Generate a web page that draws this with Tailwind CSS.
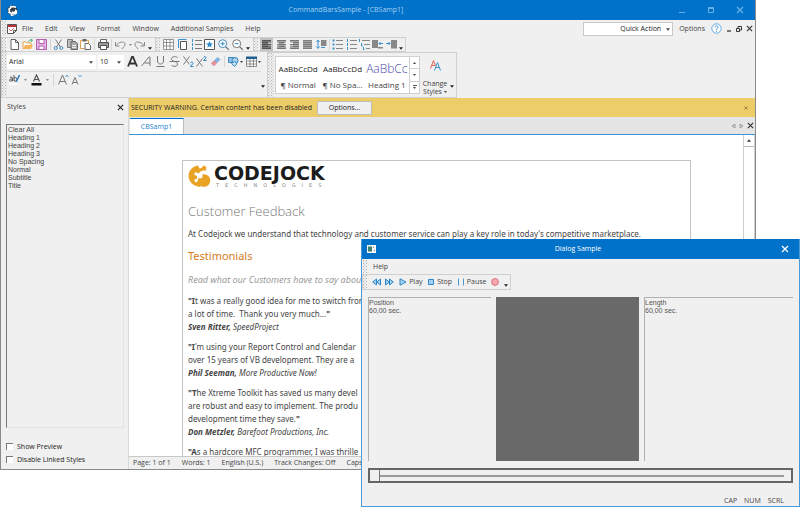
<!DOCTYPE html>
<html lang="en">
<head>
  <meta charset="UTF-8" />
  <meta name="viewport" content="width=device-width, initial-scale=1.0"/>
  <title>CommandBarsSample - [CBSamp1]</title>
  <script src="https://cdn.jsdelivr.net/npm/@tailwindcss/browser@4"></script>
</head>
<body class="relative h-screen overflow-hidden bg-white font-['Open_Sans',sans-serif] text-[7px] leading-[10px] text-[#444]">

<!-- shared glyphs -->
<svg class="hidden">
  <symbol id="down" viewBox="0 0 5 3"><path d="M0 0h5L2.500 3z" fill="currentColor"/></symbol>
  <symbol id="x" viewBox="0 0 8 8"><path d="M1 1l6 6M7 1L1 7" stroke="currentColor" stroke-width="1.300" fill="none"/></symbol>
</svg>
<svg class="absolute size-0">
  <pattern id="dots" width="3" height="3" patternUnits="userSpaceOnUse"><path d="M0 0h1v1H0zM1.500 1.500h1v1h-1z" fill="#b4b4b4"/></pattern>
</svg>

<!-- main window -->
<main class="absolute left-0 right-[44px] top-0 bottom-[37px] flex flex-col border border-t-0 border-[#8a8a8a] bg-[#f0f0f0]">
  <header class="grid h-[20px] shrink-0 grid-cols-3 items-center bg-[#0072c9] px-[6px] text-[#a9d0f0]">
    <svg class="size-[11px]" viewBox="0 0 11 11"><circle cx="5.500" cy="5.500" r="5" fill="#333c46"/><path d="M9 2.500L7 1.500 5.500 2 4 1.500 3.500 3 2 4l.5 2L2 7.500l2 .5.500 2 2 .5" fill="none" stroke="#fff" stroke-width="1.600"/><circle cx="7.500" cy="7" r="2.700" fill="#fff"/><circle cx="6.500" cy="5" r="1.700" fill="#333c46"/></svg>
    <h1 class="pr-[64px] text-center">CommandBarsSample - [CBSamp1]</h1>
    <div class="flex justify-end gap-[21px] pr-[5px] text-[#68b1e8]">
      <button aria-label="Minimize"><svg class="size-[8px]" viewBox="0 0 8 8"><path d="M1 6.500h6" stroke="currentColor"/></svg></button>
      <button aria-label="Maximize"><svg class="size-[8px]" viewBox="0 0 8 8"><path d="M1.500 1.500h5v5h-5zM1.500 2.500h5" stroke="currentColor" fill="none"/></svg></button>
      <button aria-label="Close"><svg class="size-[8px]"><use href="#x"/></svg></button>
    </div>
  </header>

  <!-- menu bar -->
  <nav class="flex h-[17px] shrink-0 items-center">
    <svg class="mx-px h-[15px] w-[4px]"><rect width="4" height="15" fill="url(#dots)"/></svg>
    <svg class="size-[10px]" viewBox="0 0 10 10"><path d="M.5.5h9v6l-3 3h-6z" fill="#fff" stroke="#555"/><path d="M1 1h8v2H1z" fill="#c0303c"/><path d="M2 5l2 2 3-3" stroke="#d66" fill="none"/><path d="M6.500 9.500v-3h3" fill="none" stroke="#555"/></svg>
    <div class="ml-[5px] flex gap-[12px]">
      <button>File</button><button>Edit</button><button>View</button><button>Format</button>
      <button>Window</button><button>Additional Samples</button><button>Help</button>
    </div>
    <div class="ml-auto flex items-center">
      <label class="relative block">
        <select aria-label="Quick Action" class="block h-[14px] w-[90px] appearance-none border border-[#c8c8c8] bg-white pr-[11px] text-[#222] [text-align-last:right]"><option>Quick Action</option></select>
        <svg class="absolute right-[3px] top-[6px] h-[3px] w-[4px]"><use href="#down"/></svg>
      </label>
      <button class="ml-[6px]">Options</button>
      <button aria-label="About" class="ml-[6px]"><svg class="size-[11px]" viewBox="0 0 11 11"><circle cx="5.500" cy="5.500" r="4.700" fill="#fff" stroke="#3f97da" stroke-width=".8"/><path d="M4 4.300c0-2 3-2 3 0 0 1-1.500 1.200-1.500 2.500M5.500 7.800v1" fill="none" stroke="#3f97da"/></svg></button>
      <button aria-label="Minimize document" class="ml-[4px]"><svg class="size-[6px]" viewBox="0 0 6 6"><path d="M1 5h4" stroke="#333" stroke-width="1.300"/></svg></button>
      <button aria-label="Restore document" class="ml-[4px]"><svg class="size-[6px]" viewBox="0 0 6 6"><path d="M.5 2.500h3v3h-3zM2 2V.5h3.500V4H4" stroke="#333" fill="none"/></svg></button>
      <button aria-label="Close document" class="ml-[4px] mr-[2px]"><svg class="size-[7px] text-[#333]"><use href="#x"/></svg></button>
    </div>
  </nav>

  <!-- toolbars -->
  <div class="flex h-[15px] shrink-0">
    <div class="flex w-[155px] items-center justify-between border border-[#d0d0d0] pr-[3px]">
      <svg class="h-[13px] w-[4px]"><rect width="4" height="13" fill="url(#dots)"/></svg>
      <button aria-label="New"><svg class="size-[11px]" viewBox="0 0 11 11"><path d="M2 .5h4.500L9.500 3.500v7H2zM6.500.5v3h3" fill="#fff" stroke="#666"/></svg></button>
      <button aria-label="Open"><svg class="size-[11px]" viewBox="0 0 11 11"><path d="M1 10V3h3l1 1h4v2" fill="#fff" stroke="#e3a04a"/><path d="M1 10l2-4h8L9 10z" fill="#f3b45c"/><path d="M6 3c1-2 2-2 4-2M8.500 0L10.500 1 9 3" fill="none" stroke="#4fae72"/></svg></button>
      <button aria-label="Save"><svg class="size-[11px]" viewBox="0 0 11 11"><path d="M.5.5h10v10H.5z" fill="#e8b5e4" stroke="#b35fae"/><path d="M3 .5h5v4H3zM3 7h5v3.500H3z" fill="#fff" stroke="#b35fae"/></svg></button>
      <span class="h-[11px] w-px bg-[#d5d5d5]"></span>
      <button aria-label="Cut"><svg class="size-[11px]" viewBox="0 0 11 11"><path d="M2.500.5l5 7.500M8.500.5l-5 7.500" stroke="#777" fill="none"/><circle cx="2.700" cy="9" r="1.500" fill="none" stroke="#3f87be"/><circle cx="8.300" cy="9" r="1.500" fill="none" stroke="#3f87be"/></svg></button>
      <button aria-label="Copy"><svg class="size-[11px]" viewBox="0 0 11 11"><path d="M.5.5h5v8h-5z" fill="#bbb" stroke="#777"/><path d="M4 2.500h4l2.500 2v6H4z" fill="#aaa" stroke="#666"/><path d="M5 6.500h4M5 8.500h4" stroke="#eee"/></svg></button>
      <button aria-label="Paste"><svg class="size-[11px]" viewBox="0 0 11 11"><path d="M.5 1.500h8v8h-8z" fill="#fff" stroke="#e0a050"/><path d="M2.500 0h4v2.500h-4z" fill="#666"/><path d="M5 4.500h3.500L10.500 6.500v4H5z" fill="#fff" stroke="#666"/></svg></button>
      <span class="h-[11px] w-px bg-[#d5d5d5]"></span>
      <button aria-label="Print"><svg class="size-[11px]" viewBox="0 0 11 11"><path d="M2.500 3V.5h6V3" fill="#fff" stroke="#666"/><path d="M.5 3.500h10v5H.5z" fill="#999" stroke="#555"/><path d="M2.500 6.500h6v4h-6z" fill="#fff" stroke="#555"/></svg></button>
      <span class="h-[11px] w-px bg-[#d5d5d5]"></span>
      <button aria-label="Undo"><svg class="size-[11px]" viewBox="0 0 11 11"><path d="M.5 3v4h4M.5 7C4 2.500 9 2 10 4.500 10.500 7 8 8 7 10" fill="none" stroke="#888"/></svg></button>
      <svg class="h-[2px] w-[3px] text-[#888]"><use href="#down"/></svg>
      <button aria-label="Redo"><svg class="size-[11px]" viewBox="0 0 11 11"><path d="M10.500 3v4h-4M10.500 7C7 2.500 2 2 1 4.500.5 7 3 8 4 10" fill="none" stroke="#888"/></svg></button>
      <svg class="mb-[1px] h-[3px] w-[4px] self-end text-[#222]"><use href="#down"/></svg>
    </div>
    <div class="flex w-[98px] items-center justify-between border border-l-0 border-[#d0d0d0] pr-[3px]">
      <svg class="h-[13px] w-[4px]"><rect width="4" height="13" fill="url(#dots)"/></svg>
      <button aria-label="Grid"><svg class="size-[11px]" viewBox="0 0 11 11"><path d="M.5.5h10v10H.5zM3.500 0v11M7 0v11M0 3.500h11M0 7h11" fill="#fff" stroke="#888" stroke-width=".9"/></svg></button>
      <button aria-label="Pages"><svg class="size-[11px]" viewBox="0 0 11 11"><path d="M3.500 2.500h6v8h-6z" fill="#fff" stroke="#555"/><path d="M1.500 9V.5h8" fill="none" stroke="#3b92cc"/></svg></button>
      <button aria-label="Line numbers"><svg class="size-[11px]" viewBox="0 0 11 11"><path d="M4 1.500h7M4 5.500h7M4 9.500h7" stroke="#777"/><path d="M1.500 0v3M1.500 4v3M1.500 8v3" stroke="#3b92cc"/></svg></button>
      <button aria-label="Favorite"><svg class="size-[11px]" viewBox="0 0 11 11"><path d="M.5.5h10v10H.5z" fill="#fff" stroke="#555"/><path d="M5.500 2l1 2.300 2.500.2L7 6l.7 2.500-2.200-1.300L3.300 8.500 4 6 2 4.500l2.500-.2z" fill="#2f8bcb"/></svg></button>
      <button aria-label="Zoom in"><svg class="size-[11px]" viewBox="0 0 11 11"><circle cx="4.700" cy="4.700" r="4" fill="#fff" stroke="#4a8fc0"/><path d="M7.800 7.800l3 3" stroke="#666" stroke-width="1.200"/><path d="M2.700 4.700h4M4.700 2.700v4" stroke="#2f8bcb"/></svg></button>
      <button aria-label="Zoom out"><svg class="size-[11px]" viewBox="0 0 11 11"><circle cx="4.700" cy="4.700" r="4" fill="#fff" stroke="#777"/><path d="M7.800 7.800l3 3" stroke="#666" stroke-width="1.200"/><path d="M2.700 4.700h4" stroke="#2f8bcb"/></svg></button>
      <svg class="mb-[1px] h-[3px] w-[4px] self-end text-[#222]"><use href="#down"/></svg>
    </div>
    <div class="flex w-[152px] items-center justify-between border border-l-0 border-[#d0d0d0] pr-[2px]">
      <svg class="h-[13px] w-[4px]"><rect width="4" height="13" fill="url(#dots)"/></svg>
      <button aria-label="Align left" class="bg-[#c2c2c2] p-px"><svg class="size-[11px]" viewBox="0 0 11 11"><path d="M1 1h9v2.500H1zM1 3.500h6v3H1zM1 6.500h9V9.500H1z" fill="#777"/><path d="M1 1.500h9M1 3.500h6M1 5.500h9M1 7.500h6M1 9.500h9" stroke="#555"/></svg></button>
      <button aria-label="Center"><svg class="size-[11px]" viewBox="0 0 11 11"><path d="M1 1h9v2.500H1zM2.500 3.500h6v3h-6zM1 6.500h9V9.500H1z" fill="#a5a5a5"/><path d="M1 1.500h9M2.500 3.500h6M1 5.500h9M2.500 7.500h6M1 9.500h9" stroke="#777"/></svg></button>
      <button aria-label="Align right"><svg class="size-[11px]" viewBox="0 0 11 11"><path d="M1 1h9v2.500H1zM4 3.500h6v3H4zM1 6.500h9V9.500H1z" fill="#a5a5a5"/><path d="M1 1.500h9M4 3.500h6M1 5.500h9M4 7.500h6M1 9.500h9" stroke="#777"/></svg></button>
      <button aria-label="Justify"><svg class="size-[11px]" viewBox="0 0 11 11"><path d="M1 1h9v9H1z" fill="#a5a5a5"/><path d="M1 1.500h9M1 3.500h9M1 5.500h9M1 7.500h9M1 9.500h9" stroke="#808080"/></svg></button>
      <button aria-label="Line spacing"><svg class="size-[11px]" viewBox="0 0 11 11"><path d="M5 1h5.500v6H5z" fill="#888"/><path d="M.5 3L2 1l1.500 2M2 1v8M.5 7.500L2 9.500l1.500-2M5 8.500h4" fill="none" stroke="#3b92cc"/></svg></button>
      <span class="h-[11px] w-px bg-[#d5d5d5]"></span>
      <button aria-label="Bullets"><svg class="size-[11px]" viewBox="0 0 11 11"><path d="M4 1.500h7M4 5.500h7M4 9.500h7" stroke="#888"/><path d="M.5 1.500h2M.5 5.500h2M.5 9.500h2" stroke="#3b92cc" stroke-width="2"/></svg></button>
      <button aria-label="Numbering"><svg class="size-[11px]" viewBox="0 0 11 11"><path d="M4 1.500h7M4 5.500h7M4 9.500h7" stroke="#888"/><path d="M1.500 0v3M1.500 4v3M1.500 8v3" stroke="#3b92cc"/></svg></button>
      <button aria-label="Multilevel list"><svg class="size-[11px]" viewBox="0 0 11 11"><path d="M3 1.500h8M5 5.500h6M7 9.500h4" stroke="#888"/><path d="M.5 0v3M2.500 4v3h1.500M4.500 8v3H6" fill="none" stroke="#3b92cc"/></svg></button>
      <button aria-label="Decrease indent"><svg class="size-[11px]" viewBox="0 0 11 11"><path d="M0 1h6v8H0zM6 8h5v1.500H6z" fill="#888"/><path d="M11 4.500H7M8.500 3L7 4.500 8.500 6" fill="none" stroke="#3b92cc"/></svg></button>
      <button aria-label="Increase indent"><svg class="size-[11px]" viewBox="0 0 11 11"><path d="M5 1h6v8.500H5z" fill="#888"/><path d="M0 4.500h4M2.500 3L4 4.500 2.500 6" fill="none" stroke="#3b92cc"/></svg></button>
      <svg class="mb-[1px] h-[3px] w-[4px] self-end text-[#222]"><use href="#down"/></svg>
    </div>
  </div>

  <div class="flex h-[46px] shrink-0">
    <div class="flex w-[267px] border border-t-0 border-[#d0d0d0]">
      <svg class="h-[44px] w-[5px] shrink-0"><rect width="5" height="44" fill="url(#dots)"/></svg>
      <div class="w-[254px]">
        <div class="flex h-[20px] items-center border-b border-[#dcdcdc]">
          <label class="relative mr-[2px] block">
            <select aria-label="Font" class="block h-[14px] w-[89px] appearance-none bg-white px-[2px] text-[#222]"><option>Arial</option></select>
            <svg class="absolute right-[3px] top-[6px] h-[3px] w-[4px]"><use href="#down"/></svg>
          </label>
          <label class="relative block">
            <select aria-label="Font size" class="block h-[14px] w-[26px] appearance-none bg-white px-[2px] text-[#222]"><option>10</option></select>
            <svg class="absolute right-[3px] top-[6px] h-[3px] w-[4px]"><use href="#down"/></svg>
          </label>
          <div class="flex flex-1 items-center justify-between pl-[3px]">
            <button aria-label="Bold"><svg class="size-[11px]" viewBox="0 0 11 11"><path d="M1 10.500L5 1h1l4 9.500M3 7.500h5" fill="none" stroke="#333" stroke-width="1.800"/></svg></button>
            <button aria-label="Italic"><svg class="size-[11px]" viewBox="0 0 11 11"><path d="M.5 10L8 1h1v9M3.500 7h5.500" fill="none" stroke="#777"/></svg></button>
            <button aria-label="Underline"><svg class="size-[11px]" viewBox="0 0 11 11"><path d="M2.500 0v5c0 4 6 4 6 0V0M1.500 10.500h8" fill="none" stroke="#777"/></svg></button>
            <button aria-label="Strikethrough"><svg class="size-[11px]" viewBox="0 0 11 11"><path d="M8.500 1.500C6 0 2.500.5 2.500 3c0 2.500 6 2 6 5 0 3-4.500 2.700-6 1.300M.5 5.500h10" fill="none" stroke="#777"/></svg></button>
            <button aria-label="Subscript"><svg class="size-[11px]" viewBox="0 0 11 11"><path d="M.5.5l6 8M6.500.5l-6 8" fill="none" stroke="#777"/><path d="M7.500 7c.5-1.500 3-1 2.500.5L7.500 10.500h3" fill="none" stroke="#2f8bcb"/></svg></button>
            <button aria-label="Superscript"><svg class="size-[11px]" viewBox="0 0 11 11"><path d="M.5 2.500l6 8M6.500 2.500l-6 8" fill="none" stroke="#777"/><path d="M7.500 1.500c.5-1.500 3-1 2.500.5L7.500 4.500h3" fill="none" stroke="#2f8bcb"/></svg></button>
            <button aria-label="Clear formatting"><svg class="size-[11px]" viewBox="0 0 11 11"><path d="M1 7.500L7.500 1l3 2.500L4 10z" fill="#7fb2e2"/><path d="M1 7.500L4 4.500l3 2.500L4 10z" fill="#ee8c94"/></svg></button>
            <span class="h-[11px] w-px bg-[#d5d5d5]"></span>
            <button class="flex items-center gap-px" aria-label="Shapes"><svg class="size-[11px]" viewBox="0 0 11 11"><path d="M.5 1.500h6v5h-6z" fill="#8fc4ea" stroke="#3b86bd"/><circle cx="7" cy="4.500" r="3" fill="#a9d3f0" stroke="#3b86bd"/><path d="M3.500 7.500l3-2 2.500 2-2.500 3z" fill="#c9e2f5" stroke="#3b86bd"/></svg><svg class="h-[2px] w-[3px]"><use href="#down"/></svg></button>
            <button class="flex items-center gap-px" aria-label="Table"><svg class="size-[11px]" viewBox="0 0 11 11"><path d="M.5 1.500h10v9H.5zM4 2v9M7.500 2v9M0 5h11M0 8h11" fill="#fff" stroke="#777" stroke-width=".8"/><path d="M0 .5h11v2.500H0z" fill="#1f5f92"/></svg><svg class="h-[2px] w-[3px]"><use href="#down"/></svg></button>
          </div>
        </div>
        <div class="flex h-[15px] items-center gap-[4px] pl-[2px]">
          <button aria-label="Highlight"><svg class="size-[11px]" viewBox="0 0 11 11"><path d="M0 9h8v2H0z" fill="#fff"/><path d="M1 3.500c2-1 2.500 0 2.500 1v2.700M3.500 5C1 5 .5 5.500.5 6.200.5 7.500 3 7.300 3.500 6M5 1v6M5 4.500c1-1.500 3-1 3 1s-2 2-3 1" fill="none" stroke="#444" stroke-width=".9"/><path d="M10.500 1L7 8" stroke="#2f7fc0" stroke-width="1.600"/></svg></button>
          <svg class="h-[2px] w-[3px] text-[#888]"><use href="#down"/></svg>
          <button aria-label="Font color"><svg class="h-[12px] w-[11px]" viewBox="0 0 11 12"><path d="M2.500 7.500L5.500 1l3 6.500M3.500 5.500h4" fill="none" stroke="#555" stroke-width="1.200"/><path d="M.5 9h10v2.500H.5z" fill="#111"/></svg></button>
          <svg class="h-[2px] w-[3px] text-[#888]"><use href="#down"/></svg>
          <span class="h-[12px] w-px bg-[#d5d5d5]"></span>
          <div class="flex gap-[2px]">
            <button aria-label="Grow font"><svg class="size-[11px]" viewBox="0 0 11 11"><path d="M.5 10.500L4.500 1l4 9.500M2 7.500h5" fill="none" stroke="#777"/><path d="M7.500 3L9 1l1.500 2" fill="none" stroke="#3b92cc" stroke-width=".8"/></svg></button>
            <button aria-label="Shrink font"><svg class="size-[11px]" viewBox="0 0 11 11"><path d="M1 10.500l3-7 3 7M2 8.500h4" fill="none" stroke="#777"/><path d="M7.500 1L9 3l1.500-2" fill="none" stroke="#3b92cc" stroke-width=".8"/></svg></button>
          </div>
        </div>
      </div>
      <svg class="mb-[9px] h-[3px] w-[4px] self-end text-[#222]"><use href="#down"/></svg>
    </div>
    <div class="flex w-[189px] border border-[#d0d0d0] border-l-0">
      <svg class="h-[44px] w-[6px] shrink-0"><rect width="6" height="44" fill="url(#dots)"/></svg>
      <div class="my-[3px] ml-px flex w-[145px] shrink-0 border border-[#cfcfcf] bg-white">
        <div class="grid flex-1 grid-cols-3 text-center">
          <button class="flex flex-col items-center justify-end gap-[6px] whitespace-nowrap pb-[3px]"><span class="text-[8px] text-[#222]">AaBbCcDd</span><span class="text-[8px]">¶ Normal</span></button>
          <button class="flex flex-col items-center justify-end gap-[6px] whitespace-nowrap pb-[3px]"><span class="text-[8px] text-[#222]">AaBbCcDd</span><span class="text-[8px]">¶ No Spa…</span></button>
          <button class="flex flex-col items-center justify-end gap-[6px] whitespace-nowrap pb-[3px]"><span class="text-[12px] font-light text-[#4a4aa8]">AaBbCc</span><span class="text-[8px]">Heading 1</span></button>
        </div>
        <div class="flex w-[10px] flex-col divide-y divide-[#cfcfcf] border-l border-[#cfcfcf]">
          <button aria-label="Previous styles" class="flex flex-1 items-center justify-center"><svg class="h-[2px] w-[3px] rotate-180"><use href="#down"/></svg></button>
          <button aria-label="Next styles" class="flex flex-1 items-center justify-center"><svg class="h-[2px] w-[3px]"><use href="#down"/></svg></button>
          <button aria-label="More styles" class="flex flex-1 flex-col items-center justify-center gap-px"><span class="h-px w-[4px] bg-[#555]"></span><svg class="h-[2px] w-[3px]"><use href="#down"/></svg></button>
        </div>
      </div>
      <button class="flex flex-1 flex-col items-center justify-end pb-px leading-[8px]">
        <svg class="mb-[9px] h-[11px] w-[11px]" viewBox="0 0 11 11"><path d="M.5 8.500L3.500.5l2 5M2 5.500h3" fill="none" stroke="#e0605a"/><path d="M4.500 10.500l3-8 3 8M5.500 7.500h4" fill="none" stroke="#3b92cc"/></svg>
        <span>Change</span>
        <span class="flex items-center gap-[2px]">Styles <svg class="h-[2px] w-[3px]"><use href="#down"/></svg></span>
      </button>
      <svg class="mr-[2px] mb-[9px] h-[3px] w-[4px] self-end text-[#222]"><use href="#down"/></svg>
    </div>
  </div>

  <div class="flex min-h-0 flex-1">
    <!-- styles pane -->
    <aside class="flex w-[127px] shrink-0 flex-col pl-[5px] pr-[4px]">
      <div class="flex h-[18px] items-center justify-between pl-px">
        <h2>Styles</h2>
        <button aria-label="Close styles"><svg class="size-[7px] text-[#222]"><use href="#x"/></svg></button>
      </div>
      <ul class="mt-[8px] flex-1 border border-[#e4e4e4] border-l-[#777] border-t-[#777] pl-px pt-px font-['Liberation_Sans',sans-serif] leading-[8px]">
        <li>Clear All</li><li>Heading 1</li><li>Heading 2</li><li>Heading 3</li>
        <li>No Spacing</li><li>Normal</li><li>Subtitle</li><li>Title</li>
      </ul>
      <div class="mt-[12px] mb-[3px] flex flex-col text-[#222]">
        <label class="flex h-[13px] items-center gap-[4px]"><input type="checkbox" class="size-[7px] appearance-none border-l border-t border-[#777] bg-white">Show Preview</label>
        <label class="flex h-[13px] items-center gap-[4px]"><input type="checkbox" class="size-[7px] appearance-none border-l border-t border-[#777] bg-white">Disable Linked Styles</label>
      </div>
    </aside>

    <section class="flex min-w-0 flex-1 flex-col border-l border-[#d8d8d8]">
      <div class="flex h-[19px] shrink-0 items-center bg-[#edcd68] pl-[2px] pr-[7px] text-[#222]">
        <p>SECURITY WARNING. Certain content has been disabled</p>
        <button class="ml-[5px] h-[14px] w-[55px] border border-[#bdbdbd] bg-[#f0f0f0]">Options...</button>
        <button aria-label="Dismiss" class="ml-auto"><svg class="size-[4px] text-[#6b5a20]"><use href="#x"/></svg></button>
      </div>
      <div class="flex h-[18px] shrink-0 items-end border-b border-[#3b92d2] bg-[#e5e5e5] pl-px">
        <button class="h-[16px] w-[54px] border-t border-r border-t-[#0072c9] border-r-[#bbb] bg-white text-[#1b82cf]">CBSamp1</button>
        <div class="mb-[5px] ml-auto mr-px flex items-center gap-[3px]">
          <button aria-label="Scroll tabs left"><svg class="h-[6px] w-[5px]" viewBox="0 0 5 6"><path d="M4 1v4L1 3z" fill="none" stroke="#999"/></svg></button>
          <button aria-label="Scroll tabs right"><svg class="h-[6px] w-[5px]" viewBox="0 0 5 6"><path d="M1 1v4l3-2z" fill="none" stroke="#999"/></svg></button>
          <button aria-label="Close tab"><svg class="size-[7px] text-[#333]"><use href="#x"/></svg></button>
        </div>
      </div>
      <div class="flex min-h-0 flex-1 bg-white">
        <div class="min-w-0 flex-1 overflow-hidden pt-[25px] pr-[52px] pl-[53px]">
          <article class="border border-b-0 border-[#c4c4c4] px-[5px] pt-[4px] font-['Noto_Sans',sans-serif] text-[8px] leading-[13px]">
            <div class="flex items-start gap-[3px]">
              <svg class="size-[23px]" viewBox="0 0 23 23"><path d="M10 .5l1.500 3 2-.5 2-2.500 3 1.500-.5 3.500h-3l-2.500 1-2 2-3-1.500-1.500 2.500 3 1.500v2.500l-3 1.500 1.500 2.500 3-1.500 1.500 2 .5 4C5 21 1 17 .5 11.500.5 6 4 1.500 10 .5z" fill="#e9a324"/><circle cx="16" cy="15.500" r="6.300" fill="#e9a324"/><circle cx="12" cy="11" r="2.500" fill="#fff"/></svg>
              <div class="font-['DejaVu_Sans',sans-serif]">
                <p class="text-[19px] font-bold leading-[17px] text-[#1c1c1c]">CODEJOCK</p>
                <p class="pl-[2px] pt-px text-[5px] leading-[5px] tracking-[6px] text-[#888]">TECHNOLOGIES</p>
              </div>
            </div>
            <h2 class="mt-[14px] font-['Open_Sans',sans-serif] text-[13px] font-light leading-[18px] text-[#777]">Customer Feedback</h2>
            <p class="mt-[7px] whitespace-nowrap">At Codejock we understand that technology and customer service can play a key role in today's competitive marketplace.</p>
            <h3 class="mt-[8px] text-[11px] leading-[16px] text-[#d97b1c]">Testimonials</h3>
            <p class="mt-[9px] whitespace-nowrap text-[9px] italic text-[#999]">Read what our Customers have to say about us.</p>
            <div class="mt-[8px] flex flex-col gap-[7px] whitespace-nowrap">
              <p><b>"I</b>t was a really good idea for me to switch from<br>a lot of time.&nbsp; Thank you very much...<b>"</b><br><i><b>Sven Ritter,</b> SpeedProject</i></p>
              <p><b>"I</b>'m using your Report Control and Calendar<br>over 15 years of VB development. They are a<br><i><b>Phil Seeman,</b> More Productive Now!</i></p>
              <p><b>"T</b>he Xtreme Toolkit has saved us many devel<br>are robust and easy to implement. The produ<br>development time they save.<b>"</b><br><i><b>Don Metzler,</b> Barefoot Productions, Inc.</i></p>
              <p><b>"A</b>s a hardcore MFC programmer, I was thrille</p>
            </div>
          </article>
        </div>
        <div class="w-[12px] border-x border-[#cfcfcf] bg-white">
          <button aria-label="Scroll up" class="flex h-[12px] w-full items-center justify-center border-b border-[#bbb] text-[#333]"><svg class="h-[3px] w-[4px] rotate-180"><use href="#down"/></svg></button>
        </div>
      </div>
      <footer class="flex h-[13px] shrink-0 items-center gap-[11px] border-t border-[#c8c8c8] pl-[4px]">
        <span>Page: 1 of 1</span><span>Words: 1</span><span>English (U.S.)</span><span>Track Changes: Off</span><span>Caps Lock: Off</span>
      </footer>
    </section>
  </div>
</main>

<!-- dialog window -->
<section class="absolute bottom-0 left-[361px] right-0 top-[239px] flex flex-col border border-t-0 border-[#4a9bd8] bg-[#f0f0f0]">
  <header class="grid h-[20px] shrink-0 grid-cols-3 items-center bg-[#0072c9] pl-[5px] pr-[10px] text-white">
    <svg class="h-[8px] w-[9px]" viewBox="0 0 9 8"><path d="M0 0h9v8H0z" fill="#f4f4f4"/><path d="M1 1.500h4v5H1z" fill="#3c7f6a"/><path d="M6.500 2v1M7.500 5v1" stroke="#888"/></svg>
    <h2 class="text-center">Dialog Sample</h2>
    <button aria-label="Close dialog" class="justify-self-end"><svg class="size-[8px]"><use href="#x"/></svg></button>
  </header>
  <nav class="flex h-[15px] shrink-0 items-center">
    <svg class="mx-px h-[13px] w-[4px]"><rect width="4" height="13" fill="url(#dots)"/></svg>
    <button class="ml-[5px]">Help</button>
  </nav>
  <div class="flex h-[16px] w-[149px] shrink-0 items-center justify-between border border-[#d0d0d0] pr-[2px]">
    <svg class="h-[14px] w-[4px]"><rect width="4" height="14" fill="url(#dots)"/></svg>
    <button aria-label="Rewind"><svg class="h-[8px] w-[9px]" viewBox="0 0 9 8"><path d="M4.500 1v6L.7 4zM8.500 1v6L4.700 4z" fill="#a6d2f2" stroke="#2f86c8"/></svg></button>
    <button aria-label="Fast forward"><svg class="h-[8px] w-[9px]" viewBox="0 0 9 8"><path d="M.5 1v6l3.800-3zM4.500 1v6l3.800-3z" fill="#a6d2f2" stroke="#2f86c8"/></svg></button>
    <button class="flex items-center gap-[2px]"><svg class="size-[8px]" viewBox="0 0 8 8"><path d="M1 .8v6.400L7 4z" fill="#a6d2f2" stroke="#2f86c8"/></svg>Play</button>
    <button class="flex items-center gap-[2px]"><svg class="size-[8px]" viewBox="0 0 8 8"><path d="M1.500 1.500h5v5h-5z" fill="#a6d2f2" stroke="#2f86c8"/></svg>Stop</button>
    <button class="flex items-center gap-[2px]"><svg class="size-[8px]" viewBox="0 0 8 8"><path d="M1.500.5v7M6.500.5v7" stroke="#4d97cf"/></svg>Pause</button>
    <button aria-label="Record"><svg class="size-[8px]" viewBox="0 0 8 8"><circle cx="4" cy="4" r="3.400" fill="#f5a8b0" stroke="#e0707c"/></svg></button>
    <svg class="mb-[2px] h-[3px] w-[4px] self-end text-[#222]"><use href="#down"/></svg>
  </div>
  <div class="mx-[6px] mt-[7px] flex min-h-0 flex-1 gap-[5px] font-['Liberation_Sans',sans-serif] leading-[8px] text-[#555]">
    <div class="w-[123px] border-l border-t border-[#b0b0b0] pt-px">Position<br>60,00 sec.</div>
    <div class="w-[143px] bg-[#696969]"></div>
    <div class="flex-1 border-l border-t border-[#b0b0b0] pt-px">Length<br>60,00 sec.</div>
  </div>
  <input type="range" min="0" max="100" value="0" aria-label="Playback position" class="mx-[6px] mt-[7px] block h-[15px] shrink-0 appearance-none border-2 border-[#666] bg-[linear-gradient(#999,#999)] bg-[length:97%_2px] bg-center bg-no-repeat [&::-webkit-slider-thumb]:h-[11px] [&::-webkit-slider-thumb]:w-[10px] [&::-webkit-slider-thumb]:appearance-none [&::-webkit-slider-thumb]:border-r [&::-webkit-slider-thumb]:border-[#777] [&::-webkit-slider-thumb]:bg-[#f0f0f0]">
  <footer class="flex h-[23px] shrink-0 items-end justify-end gap-[7px] pr-[15px]">
    <span>CAP</span><span>NUM</span><span>SCRL</span>
  </footer>
</section>
</body>
</html>
